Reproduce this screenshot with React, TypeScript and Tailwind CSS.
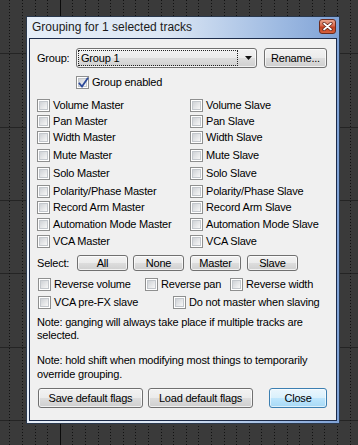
import React from "react";

const leftItems = [
  "Volume Master",
  "Pan Master",
  "Width Master",
  "Mute Master",
  "Solo Master",
  "Polarity/Phase Master",
  "Record Arm Master",
  "Automation Mode Master",
  "VCA Master",
];
const rightItems = [
  "Volume Slave",
  "Pan Slave",
  "Width Slave",
  "Mute Slave",
  "Solo Slave",
  "Polarity/Phase Slave",
  "Record Arm Slave",
  "Automation Mode Slave",
  "VCA Slave",
];
const rowMt = [
  "mt-[10px]",
  "mt-[3px]",
  "mt-[3px]",
  "mt-[5px]",
  "mt-[5px]",
  "mt-[5px]",
  "mt-[3px]",
  "mt-[4px]",
  "mt-[4px]",
];

function Box({ checked = false }: { checked?: boolean }) {
  return (
    <div className="relative w-[13px] h-[13px] shrink-0 border border-[#8e8f8f] bg-white p-[1px]">
      <div className="w-full h-full border border-[#c3c7cc] bg-[linear-gradient(135deg,#cfd2d6,#f7f7f7)]" />
      {checked && (
        <svg className="absolute left-0 top-0" width="13" height="13" viewBox="0 0 13 13">
          <path d="M2.5 6.5 L5 9.5 L10.5 1.5" fill="none" stroke="#2c4a9a" strokeWidth="1.8" strokeLinecap="square" />
        </svg>
      )}
    </div>
  );
}

function Check({ label, checked = false }: { label: string; checked?: boolean }) {
  return (
    <div className="flex items-center gap-[3px] h-[13px] whitespace-nowrap">
      <Box checked={checked} />
      <span className="leading-[13px]">{label}</span>
    </div>
  );
}

function Btn({ children, className = "", primary = false }: { children: React.ReactNode; className?: string; primary?: boolean }) {
  return (
    <div
      className={
        (primary
          ? "border-[#3c7fb1] bg-[linear-gradient(#eaf6fd,#d9f0fc_50%,#bee6fd_51%,#a7d9f5)] shadow-[inset_0_0_0_1px_rgba(255,255,255,0.6)] "
          : "border-[#707070] bg-[linear-gradient(#f2f2f2,#ebebeb_50%,#dddddd_51%,#cfcfcf)] shadow-[inset_0_0_0_1px_rgba(255,255,255,0.7)] ") +
        "flex items-center justify-center border rounded-[3px] text-black leading-none " +
        className
      }
    >
      {children}
    </div>
  );
}

function Background() {
  const xs: number[] = [];
  for (let k = 0; k < 28; k++) xs.push(Math.round(9.3 + 12.6 * k) + 0.5);
  const ys = [53, 127, 200, 273, 347, 420];
  return (
    <svg className="absolute inset-0" width="358" height="445">
      <rect width="358" height="445" fill="#3a3a3a" />
      {ys.map((y) => (
        <rect key={y} x="0" y={y} width="358" height="1" fill="#242424" />
      ))}
      {xs.map((x, i) =>
        i === 4 ? (
          <line key={x} x1={x} y1="0" x2={x} y2="445" stroke="#0a0a0a" strokeWidth="1" />
        ) : (
          <line key={x} x1={x} y1="0" x2={x} y2="445" stroke="#111" strokeWidth="1" strokeDasharray="1 2" />
        )
      )}
    </svg>
  );
}

export default function App() {
  return (
    <div className="relative w-[358px] h-[445px] overflow-hidden font-['Liberation_Sans',Arial,sans-serif] text-[11px] tracking-[-0.2px] text-black">
      <Background />
      <div className="absolute left-[26px] top-[16px] w-[314px] h-[408px] border border-[#2b394d] bg-[linear-gradient(90deg,#e6eef8,#dbe6f4_45%,#9fbbe2_80%,#7fa2d6)] flex flex-col px-[2px] pb-[2px]">
        {/* title bar */}
        <div className="h-[21px] flex items-start justify-between pl-[3px] pr-[1px] shrink-0">
          <span className="text-[12px] tracking-normal leading-[21px] text-[#1b1b1b] -mt-[0.5px]">Grouping for 1 selected tracks</span>
          <div className="mt-[2px] w-[17px] h-[15px] rounded-[3px] border border-[#6b2a1e] bg-[linear-gradient(#eaa58e,#d86a4e_45%,#c4401f_55%,#d5603c)] flex items-center justify-center">
            <svg width="11" height="9" viewBox="0 0 11 9">
              <path d="M2 1.5 L9 7.5 M9 1.5 L2 7.5" stroke="#5a2016" strokeWidth="3.2" strokeLinecap="round" />
              <path d="M2 1.5 L9 7.5 M9 1.5 L2 7.5" stroke="#ffffff" strokeWidth="1.7" strokeLinecap="round" />
            </svg>
          </div>
        </div>
        {/* client */}
        <div className="flex-1 border border-[#1d2c4a] bg-[#f0f0f0] flex flex-col pl-[7px]">
          {/* group row */}
          <div className="mt-[9px] h-[20px] flex items-center">
            <span className="w-[39px]">Group:</span>
            <div className="relative w-[181px] h-[20px] border border-[#707070] rounded-[3px] bg-[linear-gradient(#f2f2f2,#ebebeb_50%,#dddddd_51%,#cfcfcf)] shadow-[inset_0_0_0_1px_rgba(255,255,255,0.7)] flex items-center">
              <div className="ml-[1px] w-[160px] h-[16px] border border-dotted border-[#222] flex items-center pl-[2px]">
                Group 1
              </div>
              <svg className="ml-[7px]" width="7" height="4" viewBox="0 0 7 4">
                <path d="M0 0 L7 0 L3.5 4 Z" fill="#111" />
              </svg>
            </div>
            <Btn className="ml-[7px] w-[63px] h-[20px]">Rename...</Btn>
          </div>
          {/* group enabled */}
          <div className="mt-[8px] ml-[39px]">
            <Check label="Group enabled" checked />
          </div>
          {/* grid */}
          {leftItems.map((l, i) => (
            <div key={l} className={"flex " + rowMt[i]}>
              <div className="w-[153px]">
                <Check label={l} />
              </div>
              <Check label={rightItems[i]} />
            </div>
          ))}
          {/* select row */}
          <div className="mt-[7px] h-[16px] flex items-center">
            <span className="w-[40px]">Select:</span>
            <Btn className="w-[51px] h-[16px]">All</Btn>
            <Btn className="ml-[5px] w-[51px] h-[16px]">None</Btn>
            <Btn className="ml-[6px] w-[51px] h-[16px]">Master</Btn>
            <Btn className="ml-[6px] w-[51px] h-[16px]">Slave</Btn>
          </div>
          {/* reverse row */}
          <div className="mt-[7px] flex pl-[1px]">
            <div className="w-[107px]">
              <Check label="Reverse volume" />
            </div>
            <div className="w-[85px]">
              <Check label="Reverse pan" />
            </div>
            <Check label="Reverse width" />
          </div>
          <div className="mt-[5px] flex pl-[1px]">
            <div className="w-[135px]">
              <Check label="VCA pre-FX slave" />
            </div>
            <Check label="Do not master when slaving" />
          </div>
          <p className="mt-[7px] leading-[13px]">
            Note: ganging will always take place if multiple tracks are
            <br />
            selected.
          </p>
          <p className="mt-[12px] leading-[13.5px]">
            Note: hold shift when modifying most things to temporarily
            <br />
            override grouping.
          </p>
          <div className="mt-[7px] flex pl-[1px]">
            <Btn className="w-[105px] h-[20px]">Save default flags</Btn>
            <Btn className="ml-[5px] w-[105px] h-[20px]">Load default flags</Btn>
            <Btn primary className="ml-[16px] w-[58px] h-[20px]">Close</Btn>
          </div>
        </div>
      </div>
    </div>
  );
}
